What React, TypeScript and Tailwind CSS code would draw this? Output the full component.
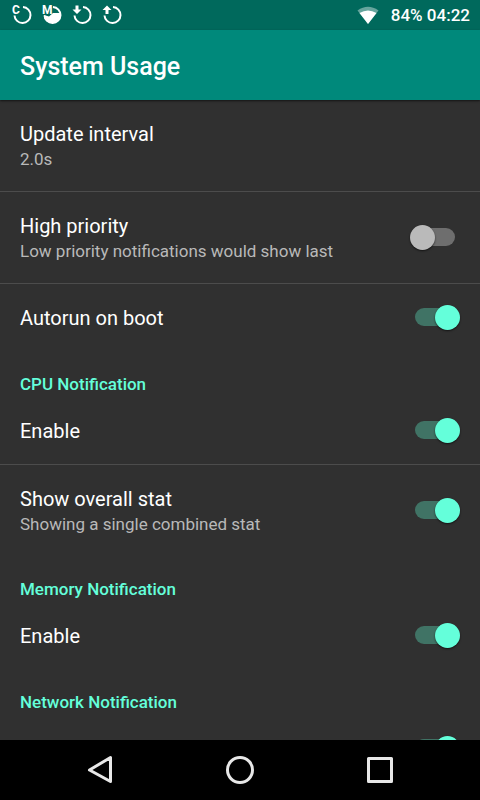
import React from 'react';

const Ring: React.FC<{ children: React.ReactNode }> = ({ children }) => (
  <svg width="30" height="30" viewBox="6 0 30 30" fill="white">
    <path d="M23 7A8 8 0 1 1 14.500 15.500" fill="none" stroke="white" strokeWidth="2" />
    {children}
  </svg>
);

const Letter: React.FC<{ children: string }> = ({ children }) => (
  <text x="12" y="14" className="font-['Liberation_Sans_Narrow',Roboto,sans-serif] text-[12px] font-bold">
    {children}
  </text>
);

const WifiIcon = () => (
  <svg width="22" height="18" viewBox="0 0 22 18" fill="white">
    <path d="M0.500 4.500Q11-3 21.500 4.500L11 18z" opacity="0.4" />
    <path d="M2.500 7Q11 2 19.500 7L11 18z" />
  </svg>
);

const StatusBar: React.FC = () => (
  <div className="flex h-[30px] shrink-0 items-center justify-between bg-[#00695c] pr-2.5 pl-1.5">
    <div className="flex">
      <Ring>
        <Letter>C</Letter>
      </Ring>
      <Ring>
        <path d="M14 15l5 1.500 4-3.500h8a9 9 0 0 1-17 5z" />
        <Letter>M</Letter>
      </Ring>
      <Ring>
        <path d="M15.500 5.500h3v4h3L17 14l-4.500-4.500h3z" />
      </Ring>
      <Ring>
        <path d="M15.500 14h3v-4h3L17 5.500 12.500 10h3z" />
      </Ring>
    </div>
    <div className="flex items-center gap-3 text-[17px] font-medium">
      <WifiIcon />
      <span className="pt-0.5">84% 04:22</span>
    </div>
  </div>
);

type RowProps = {
  title: string;
  summary?: string;
  divider?: boolean;
};

const RowText: React.FC<RowProps> = ({ title, summary }) => (
  <span className="flex flex-col">
    <span className="text-xl leading-[27px]">{title}</span>
    {summary && <span className="pb-0.5 text-[17px] leading-[22px] text-[#b9b9b9]">{summary}</span>}
  </span>
);

const SwitchRow: React.FC<RowProps & { on?: boolean }> = ({ title, summary, divider, on }) => (
  <label
    className={`flex cursor-pointer items-center justify-between px-5 pt-[21px] pb-[19px] ${divider ? 'border-b border-[#4c4c4c]' : ''}`}
  >
    <RowText title={title} summary={summary} />
    <span className="relative mb-[3px] flex h-6 w-[50px] shrink-0 items-center px-[5px]">
      <input type="checkbox" role="switch" defaultChecked={on} className="peer sr-only" />
      <span className="h-[18px] w-full rounded-full bg-[#6e6e6e] peer-checked:bg-[#407365]" />
      <span className="absolute left-0 size-[25px] rounded-full bg-[#bababa] shadow-[0_1px_2px_rgba(0,0,0,0.6)] peer-checked:left-[25px] peer-checked:bg-[#64ffda]" />
    </span>
  </label>
);

const SectionTitle: React.FC<{ children: string }> = ({ children }) => (
  <h2 className="px-5 pt-[21px] pb-px text-[17px] leading-6 font-medium text-[#64ffda]">{children}</h2>
);

const NavBar: React.FC = () => (
  <nav className="flex h-[60px] shrink-0 items-center justify-center bg-black">
    <button aria-label="Back" className="flex w-[140px] justify-center">
      <svg width="30" height="30" viewBox="0 0 30 30" fill="none" stroke="#e8e8e8" strokeWidth="3" strokeLinejoin="round">
        <path d="M25.500 2.500v24L4.500 15z" />
      </svg>
    </button>
    <button aria-label="Home" className="flex w-[140px] justify-center">
      <svg width="30" height="30" viewBox="0 0 30 30" fill="none" stroke="#e8e8e8" strokeWidth="3">
        <circle cx="15" cy="15" r="12.500" />
      </svg>
    </button>
    <button aria-label="Recent apps" className="flex w-[140px] justify-center">
      <svg width="30" height="30" viewBox="0 0 30 30" fill="none" stroke="#e8e8e8" strokeWidth="3" strokeLinejoin="round">
        <path d="M3.500 3.500h23v23h-23z" />
      </svg>
    </button>
  </nav>
);

const App: React.FC = () => {
  return (
    <div className="flex h-screen flex-col bg-[#303030] font-[Roboto,sans-serif] text-white">
      <StatusBar />
      <header className="z-10 flex h-[70px] shrink-0 items-center bg-[#00897b] px-5 pt-1 shadow-[0_1px_2px_rgba(0,0,0,0.6)]">
        <h1 className="text-[25px] font-medium">System Usage</h1>
      </header>
      <main className="min-h-0 flex-1 overflow-y-auto [scrollbar-width:none]">
        <button className="block w-full border-b border-[#4c4c4c] px-5 pt-[21px] pb-[19px] text-left">
          <RowText title="Update interval" summary="2.0s" />
        </button>
        <SwitchRow title="High priority" summary="Low priority notifications would show last" divider />
        <SwitchRow title="Autorun on boot" on />
        <SectionTitle>CPU Notification</SectionTitle>
        <SwitchRow title="Enable" divider on />
        <SwitchRow title="Show overall stat" summary="Showing a single combined stat" on />
        <SectionTitle>Memory Notification</SectionTitle>
        <SwitchRow title="Enable" on />
        <SectionTitle>Network Notification</SectionTitle>
        <SwitchRow title="Enable" on />
      </main>
      <NavBar />
    </div>
  );
};

export default App;
